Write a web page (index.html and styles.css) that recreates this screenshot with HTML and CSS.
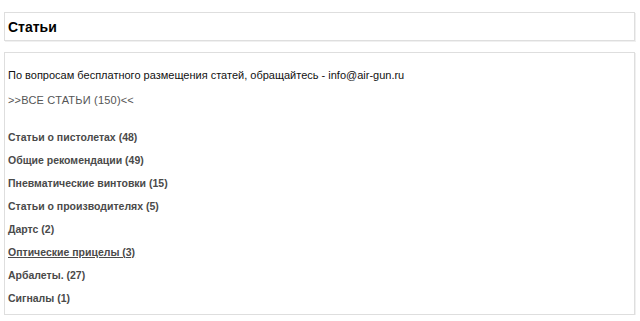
FILE: index.html
```html
<!DOCTYPE html>
<html lang="ru">
<head>
<meta charset="utf-8">
<link rel="stylesheet" href="styles.css">
</head>
<body>
<div class="page">
  <div class="box head"><h1 class="title">Статьи</h1></div>
  <div class="box body">
    <p class="intro">По вопросам бесплатного размещения статей, обращайтесь - info@air-gun.ru</p>
    <p class="all">&gt;&gt;ВСЕ СТАТЬИ (150)&lt;&lt;</p>
    <ul class="cats">
      <li><a>Статьи о пистолетах (48)</a></li>
      <li><a>Общие рекомендации (49)</a></li>
      <li><a>Пневматические винтовки (15)</a></li>
      <li><a>Статьи о производителях (5)</a></li>
      <li><a>Дартс (2)</a></li>
      <li><a class="hover">Оптические прицелы (3)</a></li>
      <li><a>Арбалеты. (27)</a></li>
      <li><a>Сигналы (1)</a></li>
    </ul>
  </div>
</div>
</body>
</html>
```
FILE: styles.css
```css
html, body { margin: 0; padding: 0; background: #fff; }
body { font-family: "Liberation Sans", Arial, sans-serif; color: #000; }
.page { padding: 12px 5px 0 4px; display: flex; flex-direction: column; gap: 11px; }
.box { border: 1px solid #dedede; box-shadow: 1px 1px 0 #f0f0f0; background: #fff; }
.head { height: 27px; display: flex; align-items: center; padding-left: 3px; }
.title { margin: 0; font-size: 14px; font-weight: bold; color: #000; }
.body { padding: 16px 4px 0 3px; height: 245px; }
.intro { margin: 0; font-size: 11px; line-height: 13px; color: #111; }
.all { margin: 12px 0 0; font-size: 11px; line-height: 13px; color: #555; letter-spacing: 0.2px; }
.cats { list-style: none; margin: 24px 0 0; padding: 0; display: flex; flex-direction: column; gap: 10px; }
.cats li { font-size: 10.5px; line-height: 13px; font-weight: bold; letter-spacing: 0; color: #4a4a4a; }
.cats a { color: #4a4a4a; }
.cats a.hover { text-decoration: underline; }
```
